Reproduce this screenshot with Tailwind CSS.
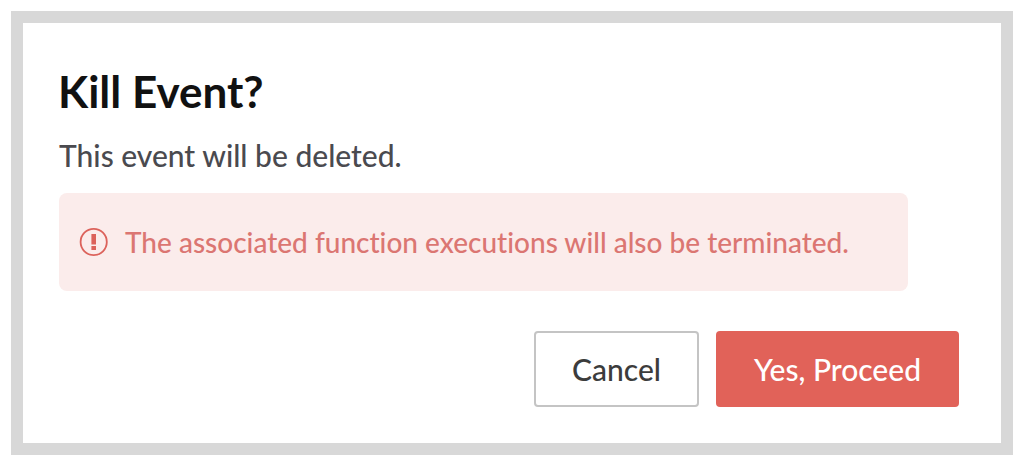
<!DOCTYPE html>
<html lang="en">
<head>
<meta charset="utf-8">
<title>Kill Event?</title>
<script src="https://cdn.jsdelivr.net/npm/@tailwindcss/browser@4"></script>
</head>
<body class="min-h-screen bg-white p-[11px] font-['Lato',sans-serif] antialiased [font-variant-ligatures:none]">
<main role="dialog" aria-labelledby="title" class="border-12 border-[#d8d8d8] bg-white pt-[42px] pr-[42px] pb-9 pl-[35px]">
  <h1 id="title" class="text-[44px] leading-[52px] font-bold text-[#111]">Kill Event?</h1>
  <div class="pl-px">
  <p class="mt-4 text-[30px] leading-[44px] font-medium text-[#4a4a4f]">This event will be deleted.</p>
  <div role="alert" class="mt-4 mr-[51px] flex h-[98px] items-center gap-4 rounded-lg bg-[#fbeceb] px-5 text-[28px] font-medium text-[#db7672]">
    <svg class="size-[30px] shrink-0" viewBox="0 0 30 30" fill="none" stroke="#dc625b" aria-hidden="true"><circle cx="14.7" cy="15" r="13.1" stroke-width="1.8"/><path d="M14.7 7v10.5M14.7 19v4" stroke-width="4.6"/></svg>
    <span>The associated function executions will also be terminated.</span>
  </div>
  <div class="mt-10 flex justify-end gap-[17px]">
    <button type="button" class="h-19 rounded-sm border-2 border-[#c4c4c4] bg-white px-9 text-[30px] font-medium text-[#3c3c3c]">Cancel</button>
    <button type="button" class="h-19 rounded-sm bg-[#e16259] px-[38px] text-[30px] font-medium text-white">Yes, Proceed</button>
  </div>
  </div>
</main>
</body>
</html>
